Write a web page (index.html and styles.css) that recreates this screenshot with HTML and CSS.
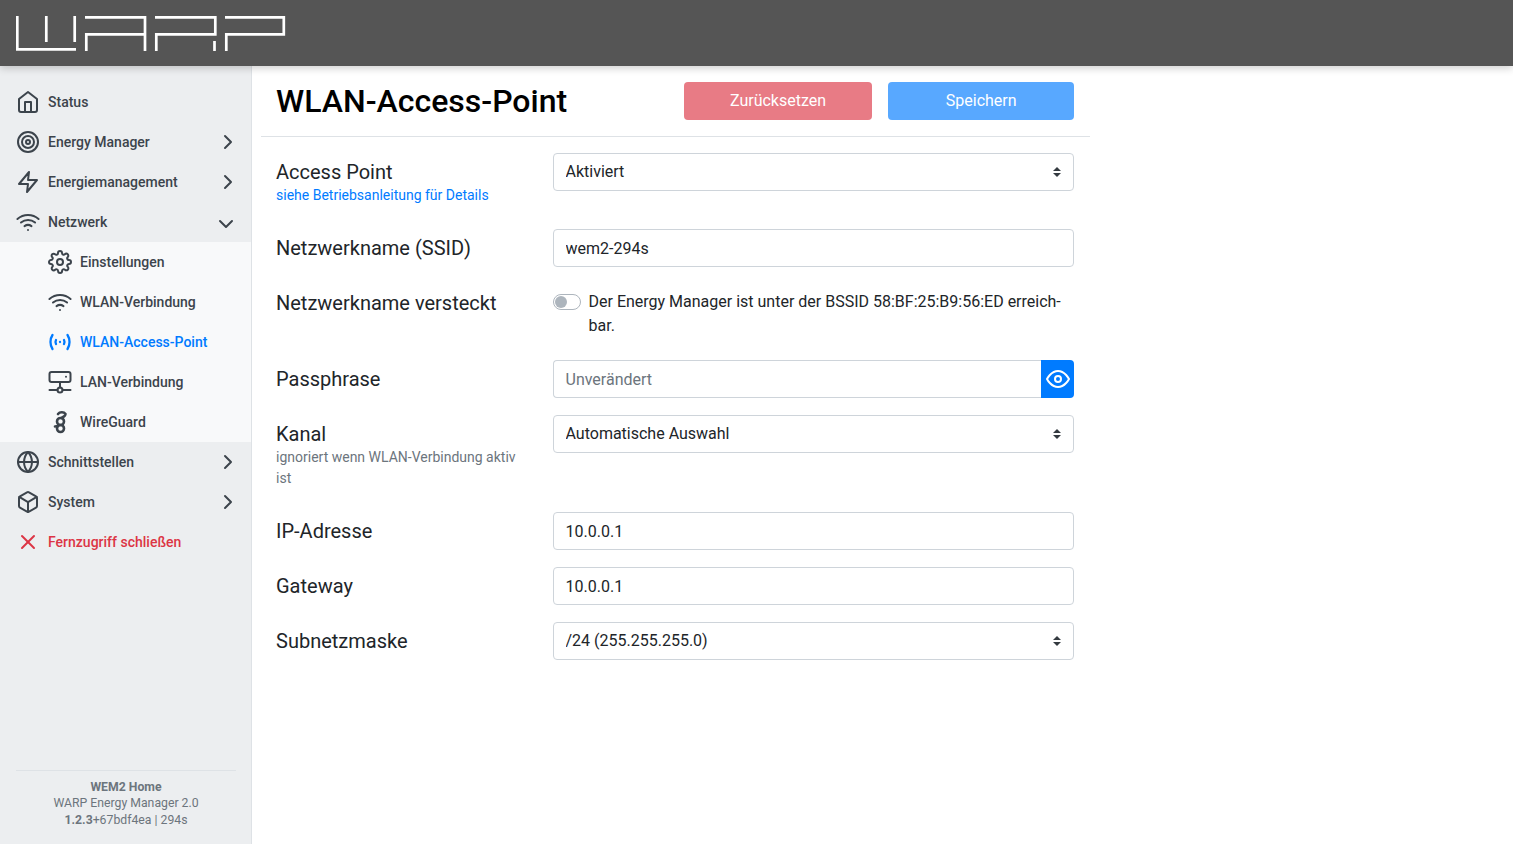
FILE: index.html
```html
<!DOCTYPE html>
<html lang="de">
<head>
  <meta charset="UTF-8" />
  <title>WARP Energy Manager</title>
  <link rel="stylesheet" href="styles.css">
</head>
<body>
  <header class="topbar">
    <svg class="logo" width="270" height="35" viewBox="0 0 270 35" fill="none" stroke="#fff" stroke-width="2.700">
      <path d="M1.300 0V33.300H60M30.300 0V26M58.700 0V26"/>
      <path d="M69 1.300H129V35M70.300 35V18.300H128"/>
      <path d="M139 1.300H199.300V18.300H140.300V35M198.500 25V35"/>
      <path d="M209 1.300H267.800V18.300H210.300V35"/>
    </svg>
  </header>

  <div class="layout">
    <nav class="sidebar">
      <ul class="nav">
        <li class="nav-item">
          <svg class="icon" viewBox="0 0 24 24"><path d="M3 9l9-7 9 7v11a2 2 0 0 1-2 2H5a2 2 0 0 1-2-2z"/><polyline points="9 22 9 12 15 12 15 22"/></svg>
          <span>Status</span>
        </li>
        <li class="nav-item">
          <svg class="icon" viewBox="0 0 24 24"><circle cx="12" cy="12" r="10"/><circle cx="12" cy="12" r="6"/><circle cx="12" cy="12" r="2"/></svg>
          <span>Energy Manager</span>
          <svg class="icon chevron" viewBox="0 0 24 24"><polyline points="9 18 15 12 9 6"/></svg>
        </li>
        <li class="nav-item">
          <svg class="icon" viewBox="0 0 24 24"><polygon points="13 2 3 14 12 14 11 22 21 10 12 10 13 2"/></svg>
          <span>Energiemanagement</span>
          <svg class="icon chevron" viewBox="0 0 24 24"><polyline points="9 18 15 12 9 6"/></svg>
        </li>
        <li class="nav-item">
          <svg class="icon" viewBox="0 0 24 24"><path d="M5 12.550a11 11 0 0 1 14.080 0"/><path d="M1.420 9a16 16 0 0 1 21.160 0"/><path d="M8.530 16.110a6 6 0 0 1 6.950 0"/><line x1="12" y1="20" x2="12.010" y2="20"/></svg>
          <span>Netzwerk</span>
          <svg class="icon chevron chevron-down" viewBox="0 0 24 24"><polyline points="6 9 12 15 18 9"/></svg>
        </li>
        <li>
          <ul class="subnav">
            <li class="nav-item">
              <svg class="icon" viewBox="0 0 24 24"><circle cx="12" cy="12" r="3"/><path d="M19.4 15a1.65 1.65 0 0 0 .33 1.82l.06.06a2 2 0 0 1 0 2.83 2 2 0 0 1-2.83 0l-.06-.06a1.65 1.65 0 0 0-1.82-.33 1.65 1.65 0 0 0-1 1.51V21a2 2 0 0 1-2 2 2 2 0 0 1-2-2v-.09A1.65 1.65 0 0 0 9 19.4a1.65 1.65 0 0 0-1.82.33l-.06.06a2 2 0 0 1-2.83 0 2 2 0 0 1 0-2.83l.06-.06a1.65 1.65 0 0 0 .33-1.82 1.65 1.65 0 0 0-1.51-1H3a2 2 0 0 1-2-2 2 2 0 0 1 2-2h.09A1.65 1.65 0 0 0 4.6 9a1.65 1.65 0 0 0-.33-1.82l-.06-.06a2 2 0 0 1 0-2.83 2 2 0 0 1 2.83 0l.06.06a1.65 1.65 0 0 0 1.82.33H9a1.65 1.65 0 0 0 1-1.51V3a2 2 0 0 1 2-2 2 2 0 0 1 2 2v.09a1.65 1.65 0 0 0 1 1.51 1.65 1.65 0 0 0 1.82-.33l.06-.06a2 2 0 0 1 2.83 0 2 2 0 0 1 0 2.83l-.06.06a1.65 1.65 0 0 0-.33 1.82V9a1.65 1.65 0 0 0 1.51 1H21a2 2 0 0 1 2 2 2 2 0 0 1-2 2h-.09a1.65 1.65 0 0 0-1.51 1z"/></svg>
              <span>Einstellungen</span>
            </li>
            <li class="nav-item">
              <svg class="icon" viewBox="0 0 24 24"><path d="M5 12.550a11 11 0 0 1 14.080 0"/><path d="M1.420 9a16 16 0 0 1 21.160 0"/><path d="M8.530 16.110a6 6 0 0 1 6.950 0"/><line x1="12" y1="20" x2="12.010" y2="20"/></svg>
              <span>WLAN-Verbindung</span>
            </li>
            <li class="nav-item active">
              <svg class="icon icon-bold" viewBox="0 0 24 24"><path d="M4.500 5C1.800 9 1.800 15 4.500 19"/><path d="M19.500 5c2.700 4 2.700 10 0 14"/><path d="M8 10c-.7 1.300-.7 2.700 0 4"/><path d="M16 10c.7 1.300.7 2.700 0 4"/><line x1="12" y1="12" x2="12.010" y2="12"/></svg>
              <span>WLAN-Access-Point</span>
            </li>
            <li class="nav-item">
              <svg class="icon" viewBox="0 0 24 24"><rect x="1.500" y="2" width="21" height="10" rx="2"/><line x1="18" y1="6.800" x2="18.010" y2="6.800"/><line x1="12" y1="12" x2="12" y2="17.500"/><circle cx="12" cy="20" r="2.500"/><line x1="1.500" y1="20" x2="9.500" y2="20"/><line x1="14.500" y1="20" x2="22.500" y2="20"/></svg>
              <span>LAN-Verbindung</span>
            </li>
            <li class="nav-item">
              <svg class="icon wireguard" viewBox="0 0 24 24"><circle cx="12.500" cy="11.500" r="3.500"/><circle cx="12.500" cy="18.500" r="3.500"/><path d="M10 4c2-2.500 6-2 7.500 0M17.500 4c0 2-2 3-4 4M7 16.500l3-.5"/></svg>
              <span>WireGuard</span>
            </li>
          </ul>
        </li>
        <li class="nav-item">
          <svg class="icon" viewBox="0 0 24 24"><circle cx="12" cy="12" r="10"/><line x1="2" y1="12" x2="22" y2="12"/><path d="M12 2a15.300 15.300 0 0 1 4 10 15.300 15.300 0 0 1-4 10 15.300 15.300 0 0 1-4-10 15.300 15.300 0 0 1 4-10z"/></svg>
          <span>Schnittstellen</span>
          <svg class="icon chevron" viewBox="0 0 24 24"><polyline points="9 18 15 12 9 6"/></svg>
        </li>
        <li class="nav-item">
          <svg class="icon" viewBox="0 0 24 24"><path d="M21 16V8a2 2 0 0 0-1-1.730l-7-4a2 2 0 0 0-2 0l-7 4A2 2 0 0 0 3 8v8a2 2 0 0 0 1 1.730l7 4a2 2 0 0 0 2 0l7-4A2 2 0 0 0 21 16z"/><polyline points="3.270 6.960 12 12.010 20.730 6.960"/><line x1="12" y1="22.080" x2="12" y2="12"/></svg>
          <span>System</span>
          <svg class="icon chevron" viewBox="0 0 24 24"><polyline points="9 18 15 12 9 6"/></svg>
        </li>
        <li class="nav-item danger">
          <svg class="icon" viewBox="0 0 24 24"><line x1="18" y1="6" x2="6" y2="18"/><line x1="6" y1="6" x2="18" y2="18"/></svg>
          <span>Fernzugriff schließen</span>
        </li>
      </ul>

      <footer class="side-footer">
        <div><b>WEM2 Home</b></div>
        <div>WARP Energy Manager 2.0</div>
        <div><b>1.2.3</b>+67bdf4ea | 294s</div>
      </footer>
    </nav>

    <main class="content">
      <div class="page-header">
        <h1>WLAN-Access-Point</h1>
        <div class="actions">
          <button class="btn btn-reset" type="button">Zurücksetzen</button>
          <button class="btn btn-save" type="button">Speichern</button>
        </div>
      </div>

      <form class="form">
        <div class="form-row">
          <label class="form-label">Access Point<small class="link">siehe Betriebsanleitung für Details</small></label>
          <div class="form-field">
            <select class="form-control select"><option>Aktiviert</option></select>
          </div>
        </div>
        <div class="form-row">
          <label class="form-label">Netzwerkname (SSID)</label>
          <div class="form-field"><input class="form-control" type="text" value="wem2-294s"></div>
        </div>
        <div class="form-row">
          <label class="form-label">Netzwerkname versteckt</label>
          <div class="form-field switch-field">
            <span class="switch"></span>
            <span class="switch-text">Der Energy Manager ist unter der BSSID 58:BF:25:B9:56:ED erreich-<br>bar.</span>
          </div>
        </div>
        <div class="form-row">
          <label class="form-label">Passphrase</label>
          <div class="form-field input-group">
            <input class="form-control" type="text" placeholder="Unverändert">
            <button class="eye-btn" type="button">
              <svg class="icon" viewBox="0 0 24 24"><path d="M1 12s4-8 11-8 11 8 11 8-4 8-11 8-11-8-11-8z"/><circle cx="12" cy="12" r="3"/></svg>
            </button>
          </div>
        </div>
        <div class="form-row">
          <label class="form-label">Kanal<small class="muted">ignoriert wenn WLAN-Verbindung aktiv ist</small></label>
          <div class="form-field">
            <select class="form-control select"><option>Automatische Auswahl</option></select>
          </div>
        </div>
        <div class="form-row">
          <label class="form-label">IP-Adresse</label>
          <div class="form-field"><input class="form-control" type="text" value="10.0.0.1"></div>
        </div>
        <div class="form-row">
          <label class="form-label">Gateway</label>
          <div class="form-field"><input class="form-control" type="text" value="10.0.0.1"></div>
        </div>
        <div class="form-row">
          <label class="form-label">Subnetzmaske</label>
          <div class="form-field">
            <select class="form-control select"><option>/24 (255.255.255.0)</option></select>
          </div>
        </div>
      </form>
    </main>
  </div>
</body>
</html>
```

FILE: styles.css
```css
* {
  box-sizing: border-box;
}
html, body {
  height: 100%;
}
body {
  margin: 0;
  font-family: Roboto, "Liberation Sans", sans-serif;
  font-size: 16px;
  line-height: 1.5;
  color: #212529;
  background: #fff;
  display: flex;
  flex-direction: column;
  overflow: hidden;
}

.topbar {
  height: 66px;
  flex: none;
  padding: 16px;
  background: #555;
  box-shadow: 0 2px 8px rgba(0,0,0,0.2);
  position: relative;
  z-index: 5;
}
.logo {
  display: block;
}

.layout {
  flex: 1;
  display: flex;
  min-height: 0;
}

.sidebar {
  width: 252px;
  flex: none;
  display: flex;
  flex-direction: column;
  padding-top: 16px;
  background: #eceef0;
  border-right: 1px solid #dee2e6;
}
.nav, .subnav {
  list-style: none;
  margin: 0;
  padding: 0;
}
.nav-item {
  height: 40px;
  display: flex;
  align-items: center;
  gap: 8px;
  padding: 0 11px 0 16px;
  font-size: 14px;
  font-weight: 500;
  color: #3c444c;
}
.subnav {
  background: #f8f9fa;
}
.subnav .nav-item {
  padding-left: 48px;
}
.active {
  color: #007bff;
}
.danger {
  color: #dc3545;
}
.icon {
  width: 24px;
  height: 24px;
  flex: none;
  fill: none;
  stroke: currentColor;
  stroke-width: 2;
  stroke-linecap: round;
  stroke-linejoin: round;
}
.icon-bold {
  stroke-width: 2.300;
}
.wireguard {
  stroke-width: 2.600;
}
.chevron {
  margin-left: auto;
}
.chevron-down {
  margin-right: 2px;
  margin-top: 3px;
}

.side-footer {
  margin: auto 15px 0 16px;
  padding: 8px 0 15.700px;
  border-top: 1px solid #dee2e6;
  font-size: 12.250px;
  line-height: 16.500px;
  text-align: center;
  color: #6c757d;
}

.content {
  width: 828.600px;
  margin-left: 9px;
  flex: none;
}
.page-header {
  height: 71px;
  display: flex;
  align-items: center;
  justify-content: space-between;
  padding: 0 15.200px 0 15px;
  border-bottom: 1px solid #dee2e6;
}
.page-header h1 {
  margin: 0;
  font-size: 32px;
  font-weight: 500;
  line-height: 1.2;
  white-space: nowrap;
  color: #000;
}
.actions {
  width: 390.400px;
  display: flex;
  gap: 16px;
}
.btn {
  flex: 1;
  height: 38px;
  border: 1px solid transparent;
  border-radius: 4px;
  font: inherit;
  color: #fff;
  opacity: .65;
}
.btn-reset {
  flex: none;
  width: 188px;
  background: #dc3545;
}
.btn-save {
  background: #007bff;
}

.form {
  padding: 16px 15.200px 0 15px;
}
.form-row {
  display: flex;
  margin-bottom: 17px;
}
.form-label {
  width: 276.500px;
  flex: none;
  padding: 7px 30px 7px 0;
  font-size: 20px;
  line-height: 24px;
  color: #212529;
}
.form-label small {
  display: block;
  margin: 1px 0 -1px;
  font-size: 14px;
  line-height: 21px;
}
.link {
  color: #007bff;
}
.muted {
  color: #6c757d;
}
.form-field {
  flex: 1;
  min-width: 0;
}
.form-control {
  display: block;
  width: 100%;
  height: 38px;
  padding: 6px 12px;
  border: 1px solid #ced4da;
  border-radius: 4px;
  background: #fff;
  font: inherit;
  color: #212529;
  outline: none;
}
.form-control::placeholder {
  color: #6c757d;
  opacity: 1;
}
.select {
  appearance: none;
  padding-right: 28px;
  background: #fff url("data:image/svg+xml,%3csvg xmlns='http://www.w3.org/2000/svg' width='4' height='5' viewBox='0 0 4 5'%3e%3cpath fill='%23343a40' d='M2 0L0 2h4zm0 5L0 3h4z'/%3e%3c/svg%3e") no-repeat right 12px center / 8px 10px;
}
.input-group {
  display: flex;
}
.input-group .form-control {
  flex: 1;
  min-width: 0;
  border-right: 0;
  border-radius: 4px 0 0 4px;
}
.eye-btn {
  width: 33.670px;
  height: 38px;
  flex: none;
  padding: 0;
  display: flex;
  align-items: center;
  justify-content: center;
  border: 0;
  border-radius: 0 4px 4px 0;
  background: #007bff;
  color: #fff;
}
.switch-field {
  display: flex;
  padding: 5px 0 6px;
}
.switch {
  width: 28px;
  height: 16px;
  flex: none;
  margin: 5px 8px 0 0;
  border: 1px solid #adb5bd;
  border-radius: 8px;
  background: #fff;
  position: relative;
}
.switch::after {
  content: "";
  position: absolute;
  top: 1px;
  left: 1px;
  width: 12px;
  height: 12px;
  border-radius: 50%;
  background: #adb5bd;
}
.switch-text {
  line-height: 24px;
  position: relative;
  top: 1px;
}
```
